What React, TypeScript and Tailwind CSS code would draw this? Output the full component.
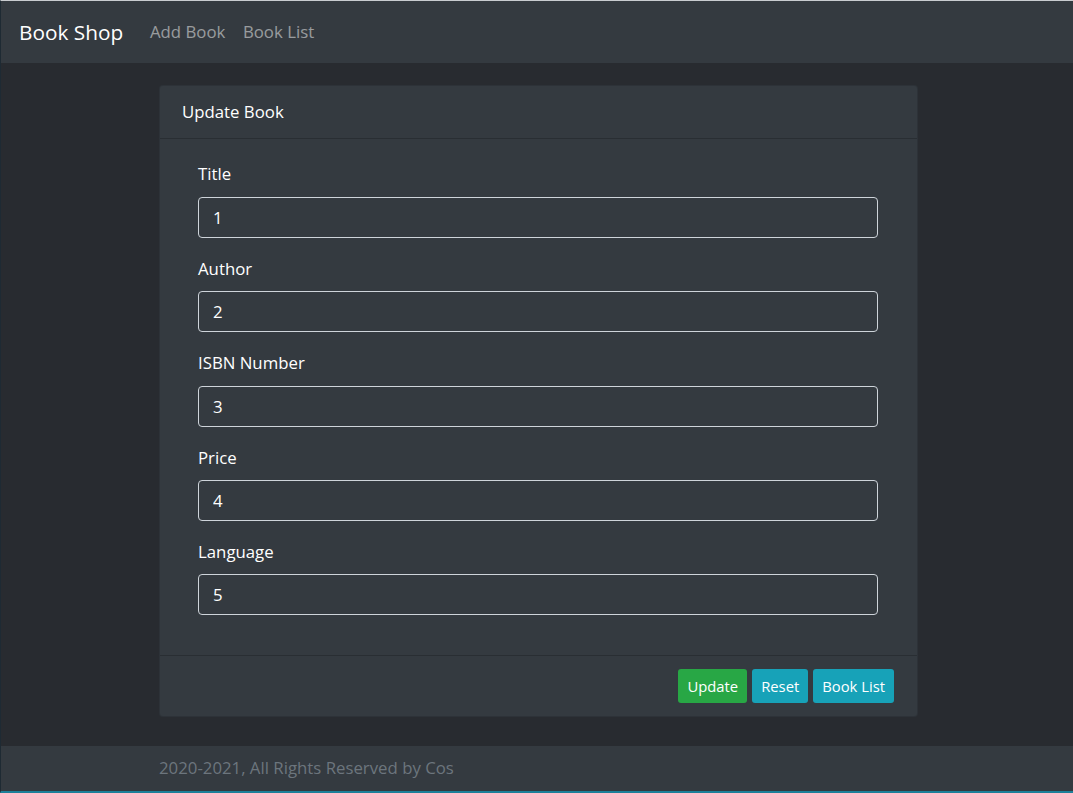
import { useState } from "react";

const fields = [
  { key: "title", label: "Title", value: "1" },
  { key: "author", label: "Author", value: "2" },
  { key: "isbn", label: "ISBN Number", value: "3" },
  { key: "price", label: "Price", value: "4" },
  { key: "language", label: "Language", value: "5" },
];

export default function App() {
  const [values, setValues] = useState<Record<string, string>>(
    Object.fromEntries(fields.map((f) => [f.key, f.value]))
  );

  return (
    <div
      className="flex h-[793px] flex-col overflow-hidden border-t border-t-[#c9ccd0] border-b-2 border-b-[#1d7f99] border-l border-l-[#1e2a33] bg-[#282b30] text-[16.8px] leading-[26.4px] text-white"
      style={{ fontFamily: '"Open Sans", "Noto Sans", sans-serif' }}
    >
      <nav className="flex h-[62px] shrink-0 items-center bg-[#343a40] px-[18px]">
        <span className="mr-[18px] text-[20.8px] text-white">Book Shop</span>
        <a className="px-[8.8px] text-[rgba(255,255,255,0.5)]">Add Book</a>
        <a className="px-[8.8px] text-[rgba(255,255,255,0.5)]">Book List</a>
      </nav>

      <main className="flex-1">
        <div className="ml-[158px] mt-[22px] w-[759px] rounded-[4px] border border-[rgba(0,0,0,0.125)] bg-[#343a40]">
          <div className="border-b border-[rgba(0,0,0,0.2)] px-[22px] py-[13px]">Update Book</div>
          <div className="pl-[38px] pr-[39px] pt-[22px] pb-[22px]">
            {fields.map((f) => (
              <div key={f.key} className="mb-[18px]">
                <label className="mb-[9px] block">{f.label}</label>
                <input
                  value={values[f.key]}
                  onChange={(e) => setValues({ ...values, [f.key]: e.target.value })}
                  className="block h-[41px] w-full rounded-[4px] border border-[#ced4da] bg-transparent px-[14px] text-white outline-none"
                />
              </div>
            ))}
          </div>
          <div className="flex justify-end gap-[5px] border-t border-[rgba(0,0,0,0.2)] px-[23px] py-[13px] text-[14.8px]">
            <button className="h-[34px] rounded-[3px] bg-[#28a745] px-[9px] text-white">Update</button>
            <button className="h-[34px] rounded-[3px] bg-[#17a2b8] px-[9px] text-white">Reset</button>
            <button className="h-[34px] rounded-[3px] bg-[#17a2b8] px-[9px] text-white">Book List</button>
          </div>
        </div>
      </main>

      <footer className="flex h-[45px] shrink-0 items-center bg-[#343a40]">
        <div className="ml-[158px] text-[#6c757d]">2020-2021, All Rights Reserved by Cos</div>
      </footer>
    </div>
  );
}
